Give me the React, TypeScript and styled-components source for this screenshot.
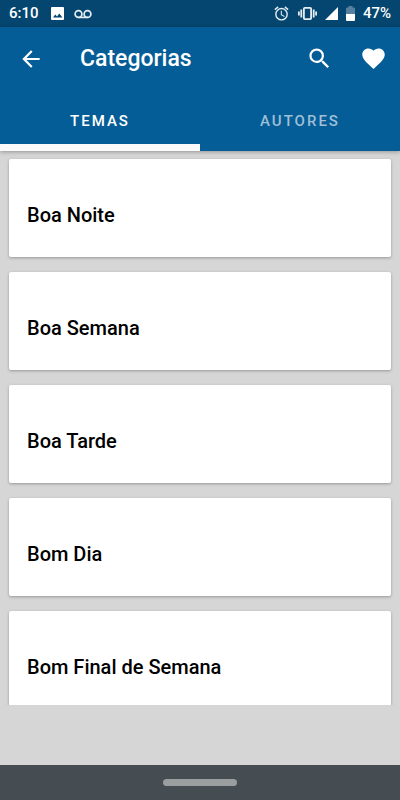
import React, { useState } from "react";
import styled, { createGlobalStyle } from "styled-components";

const GlobalStyle = createGlobalStyle`
  * { box-sizing: border-box; }
  body { margin: 0; background: #d6d6d6; font-family: Roboto, sans-serif; }
`;

const Screen = styled.div`
  display: flex;
  flex-direction: column;
  height: 100vh;
  background: #d6d6d6;
`;

const StatusBar = styled.div`
  display: flex;
  align-items: center;
  justify-content: space-between;
  flex: none;
  height: 27px;
  padding: 0 9px;
  background: #04466f;
  color: #fff;
  font-size: 15px;
  font-weight: 500;
  line-height: 27px;
`;

const StatusGroup = styled.div<{ $gap: number }>`
  display: flex;
  align-items: center;
  gap: ${(p) => p.$gap}px;
`;

const Clock = styled.time`
  padding-right: 2px;
`;

const Header = styled.header`
  flex: none;
  background: #045d96;
  color: #fff;
  box-shadow: 0 1px 4px rgba(0, 0, 0, 0.3);
  z-index: 1;
`;

const AppBar = styled.div`
  display: flex;
  align-items: center;
  height: 63px;
  padding: 0 12px 0 16px;
`;

const IconButton = styled.button`
  display: flex;
  align-items: center;
  justify-content: center;
  width: 30px;
  height: 30px;
  padding: 0;
  border: 0;
  background: none;
  color: inherit;
  cursor: pointer;
`;

const Title = styled.h1`
  flex: 1;
  margin: 0 0 0 34px;
  font-size: 23px;
  font-weight: 500;
  line-height: 28px;
`;

const Actions = styled.div`
  display: flex;
  gap: 24px;
`;

const Tabs = styled.div`
  display: flex;
  height: 61px;
`;

const Tab = styled.button<{ $active: boolean }>`
  flex: 1;
  padding: 7px 0 0;
  border: 0;
  border-bottom: 7px solid ${(p) => (p.$active ? "#fafafa" : "transparent")};
  background: none;
  color: ${(p) => (p.$active ? "#fff" : "#9fbfd7")};
  font-family: inherit;
  font-size: 15px;
  font-weight: 500;
  letter-spacing: 2px;
  text-transform: uppercase;
  cursor: pointer;
`;

const CardList = styled.main`
  display: flex;
  flex-direction: column;
  gap: 15px;
  flex: 1;
  min-height: 0;
  padding: 8px 9px 0;
  overflow: hidden;
`;

const Card = styled.a`
  display: flex;
  align-items: center;
  flex: none;
  height: 98px;
  padding: 14px 18px 0;
  border-radius: 2px;
  background: #fff;
  box-shadow: 0 1px 3px rgba(0, 0, 0, 0.3);
  color: #000;
  font-size: 20px;
  font-weight: 500;
  line-height: 24px;
  text-decoration: none;
`;

const FooterSpace = styled.div`
  flex: none;
  height: 60px;
`;

const NavBar = styled.nav`
  display: flex;
  align-items: center;
  justify-content: center;
  flex: none;
  height: 35px;
  background: #454d52;
`;

const HomeHandle = styled.button`
  width: 74px;
  height: 7px;
  padding: 0;
  border: 0;
  border-radius: 4px;
  background: #9a9e9f;
`;

const PhotoIcon = () => (
  <svg width="13" height="13" viewBox="0 0 13 13" aria-hidden="true">
    <path
      fill="#fff"
      fillRule="evenodd"
      d="M1 0h11a1 1 0 0 1 1 1v11a1 1 0 0 1-1 1H1a1 1 0 0 1-1-1V1a1 1 0 0 1 1-1zM2 10.500h9.500L8.300 6.500 6 9.400 4.300 7.500z"
    />
  </svg>
);

const VoicemailIcon = () => (
  <svg width="18" height="10" viewBox="0 0 18 10" fill="none" stroke="#e4edf3" strokeWidth="1.700" aria-hidden="true">
    <circle cx="4.500" cy="5" r="3.400" />
    <circle cx="13.500" cy="5" r="3.400" />
    <path d="M4.500 8.400h9" />
  </svg>
);

const AlarmIcon = () => (
  <svg width="17" height="17" viewBox="0 0 24 24" fill="#e4edf3" aria-hidden="true">
    <path d="M22 5.720l-4.600-3.860-1.290 1.530 4.600 3.860L22 5.720zM7.880 3.390L6.600 1.860 2 5.710l1.290 1.530 4.590-3.850zM12.500 8H11v6l4.750 2.850.75-1.230-4-2.370V8zM12 4a9 9 0 1 0 0 18 9 9 0 0 0 0-18zm0 16a7 7 0 1 1 0-14 7 7 0 0 1 0 14z" />
  </svg>
);

const VibrateIcon = () => (
  <svg width="19" height="15" viewBox="0 0 19 15" fill="none" stroke="#e4edf3" strokeWidth="1.800" aria-hidden="true">
    <rect x="5.900" y="1.900" width="7.200" height="11.200" rx="0.800" />
    <path d="M3.300 3.500v8M15.700 3.500v8M.9 5.500v4M18.100 5.500v4" />
  </svg>
);

const SignalIcon = () => (
  <svg width="13" height="13" viewBox="0 0 13 13" fill="#fff" aria-hidden="true">
    <path d="M13 0v13H0z" />
  </svg>
);

const BatteryIcon = () => (
  <svg width="9" height="15" viewBox="0 0 9 15" aria-hidden="true">
    <path fill="#5580a0" d="M2.500 0h4v1.500H8a1 1 0 0 1 1 1V8H0V2.500a1 1 0 0 1 1-1h1.500z" />
    <path fill="#fff" d="M0 8h9v6a1 1 0 0 1-1 1H1a1 1 0 0 1-1-1z" />
  </svg>
);

const BackIcon = () => (
  <svg width="26" height="26" viewBox="0 0 24 24" fill="currentColor" aria-hidden="true">
    <path d="M20 11H7.830l5.590-5.590L12 4l-8 8 8 8 1.410-1.410L7.830 13H20v-2z" />
  </svg>
);

const SearchIcon = () => (
  <svg width="27" height="27" viewBox="0 0 24 24" fill="currentColor" aria-hidden="true">
    <path d="M15.500 14h-.79l-.28-.27A6.471 6.471 0 0 0 16 9.500 6.500 6.500 0 1 0 9.500 16c1.610 0 3.090-.59 4.230-1.570l.27.28v.79l5 4.990L20.490 19l-4.990-5zm-6 0C7.010 14 5 11.990 5 9.500S7.010 5 9.500 5 14 7.010 14 9.500 11.990 14 9.500 14z" />
  </svg>
);

const HeartIcon = () => (
  <svg width="27" height="27" viewBox="0 0 24 24" fill="currentColor" aria-hidden="true">
    <path d="M12 21.350l-1.450-1.320C5.400 15.360 2 12.280 2 8.500 2 5.420 4.420 3 7.500 3c1.740 0 3.410.81 4.500 2.090C13.090 3.810 14.760 3 16.500 3 19.580 3 22 5.420 22 8.500c0 3.780-3.400 6.860-8.550 11.540L12 21.350z" />
  </svg>
);

const TABS = ["Temas", "Autores"];
const THEMES = ["Boa Noite", "Boa Semana", "Boa Tarde", "Bom Dia", "Bom Final de Semana"];

export default function App() {
  const [active, setActive] = useState(0);

  return (
    <Screen>
      <GlobalStyle />
      <StatusBar>
        <StatusGroup $gap={10}>
          <Clock>6:10</Clock>
          <PhotoIcon />
          <VoicemailIcon />
        </StatusGroup>
        <StatusGroup $gap={8}>
          <AlarmIcon />
          <VibrateIcon />
          <SignalIcon />
          <BatteryIcon />
          <span>47%</span>
        </StatusGroup>
      </StatusBar>
      <Header>
        <AppBar>
          <IconButton aria-label="Voltar">
            <BackIcon />
          </IconButton>
          <Title>Categorias</Title>
          <Actions>
            <IconButton aria-label="Buscar">
              <SearchIcon />
            </IconButton>
            <IconButton aria-label="Favoritos">
              <HeartIcon />
            </IconButton>
          </Actions>
        </AppBar>
        <Tabs role="tablist">
          {TABS.map((label, i) => (
            <Tab key={label} role="tab" aria-selected={i === active} $active={i === active} onClick={() => setActive(i)}>
              {label}
            </Tab>
          ))}
        </Tabs>
      </Header>
      <CardList>
        {THEMES.map((name) => (
          <Card key={name} href="#">
            {name}
          </Card>
        ))}
      </CardList>
      <FooterSpace />
      <NavBar>
        <HomeHandle aria-label="Início" />
      </NavBar>
    </Screen>
  );
}
